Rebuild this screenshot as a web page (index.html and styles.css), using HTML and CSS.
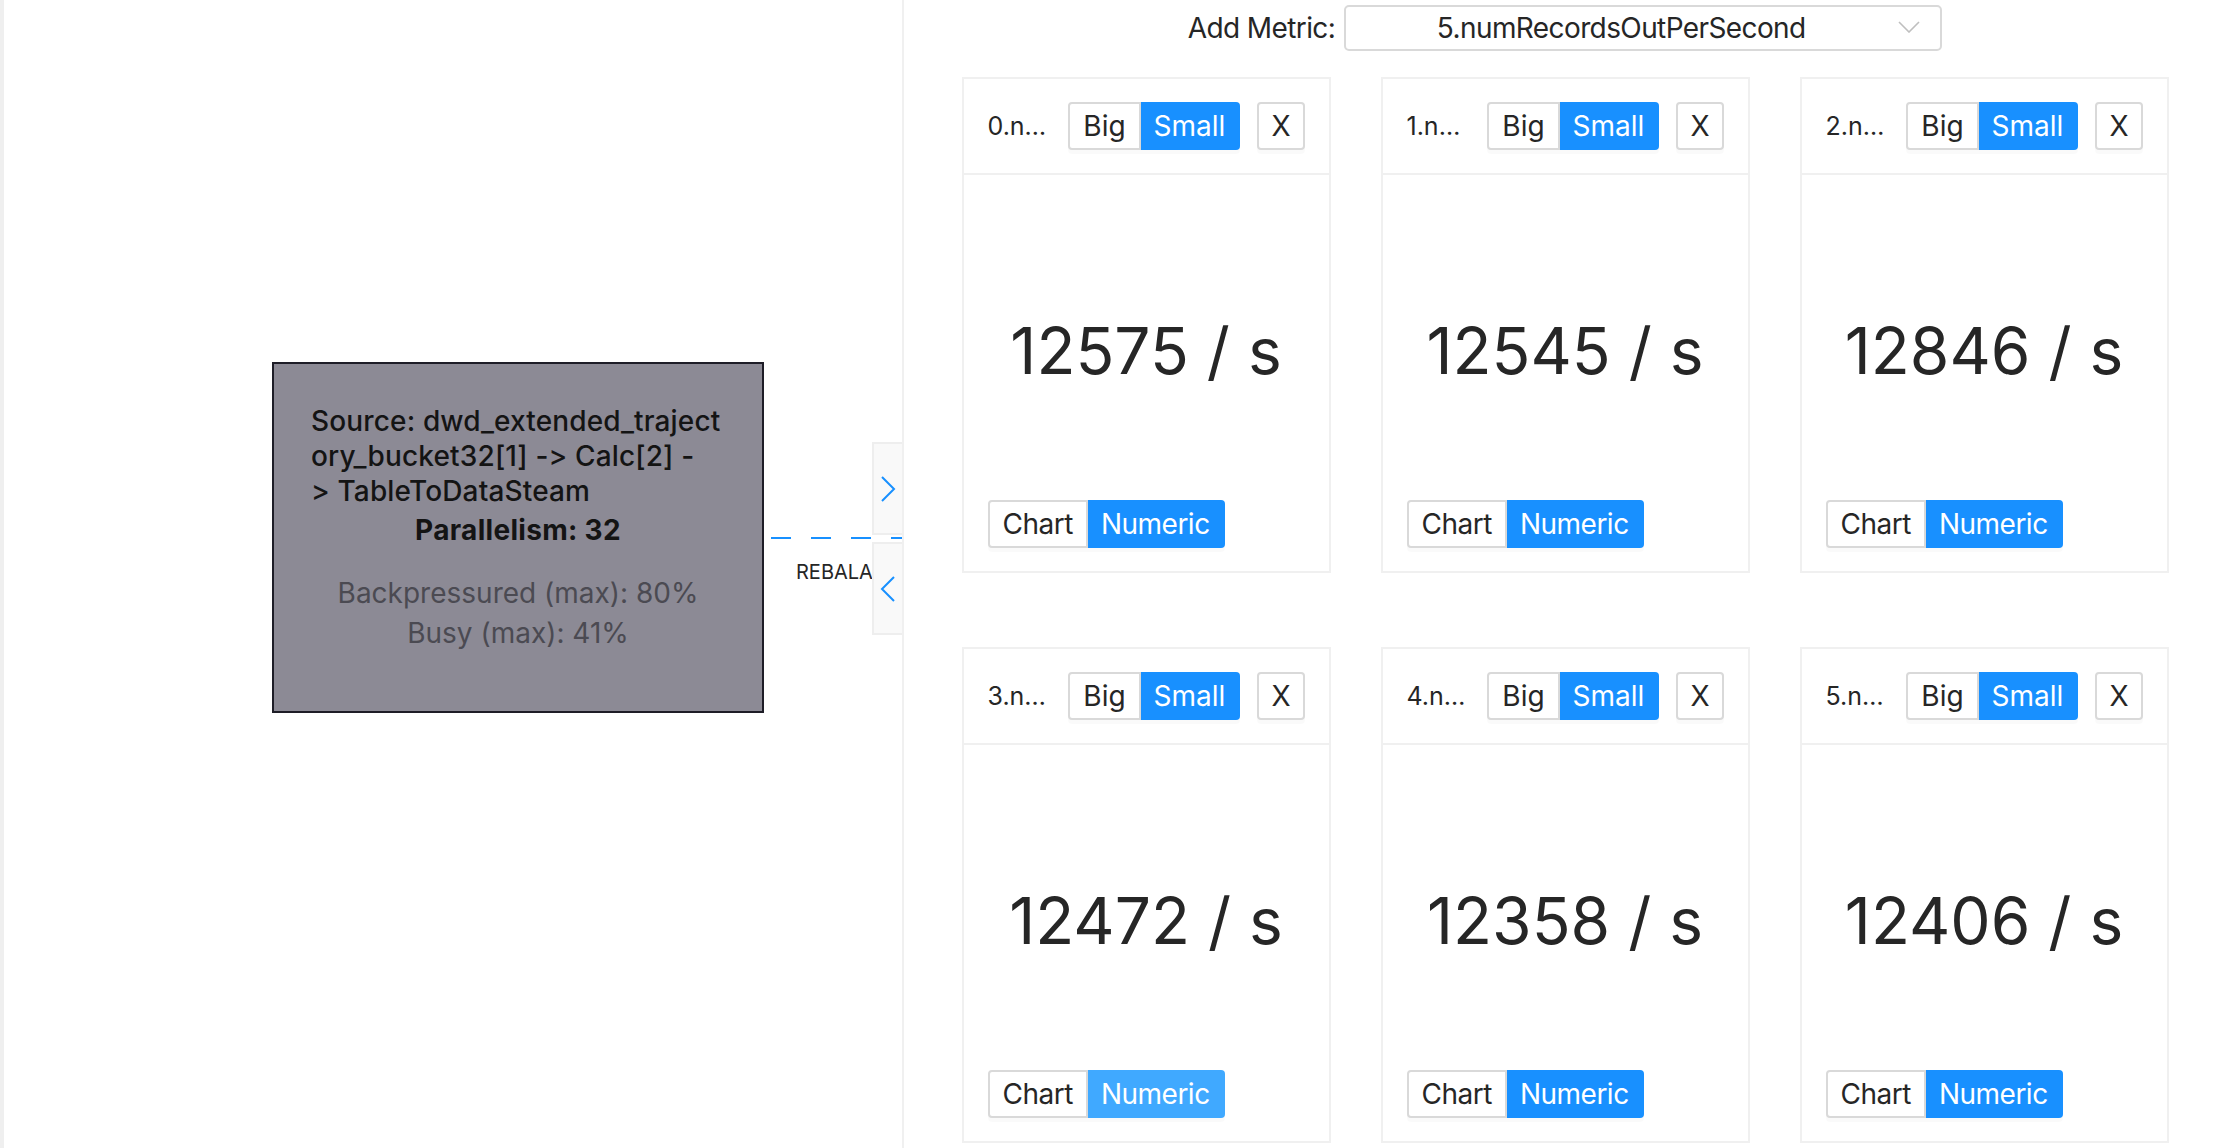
FILE: index.html
```html
<!DOCTYPE html>
<html lang="en">
<head>
<meta charset="utf-8">
<title>Job Graph Metrics</title>
<link rel="stylesheet" href="styles.css">
</head>
<body>
<div class="app">
  <div class="strip"></div>
  <div class="graph">
    <div class="node">
      <h4 class="node-name">Source: dwd_extended_traject<br>ory_bucket32[1] -&gt; Calc[2] -<br>&gt; TableToDataSteam</h4>
      <h5 class="node-par">Parallelism: 32</h5>
      <div class="node-stat first">Backpressured (max): 80%</div>
      <div class="node-stat">Busy (max): 41%</div>
    </div>
    <div class="edge"></div>
    <div class="edge-label">REBALANCE</div>
    <div class="collapse">
      <div class="collapse-btn">
        <svg width="16" height="26" viewBox="0 0 16 26"><polyline points="2,1 14,13 2,25" fill="none" stroke="#1890ff" stroke-width="2"/></svg>
      </div>
      <div class="collapse-btn">
        <svg width="16" height="26" viewBox="0 0 16 26"><polyline points="14,1 2,13 14,25" fill="none" stroke="#1890ff" stroke-width="2"/></svg>
      </div>
    </div>
  </div>
  <div class="panel">
    <div class="toolbar">
      <span class="toolbar-label">Add Metric:</span>
      <div class="select">
        <span class="select-value">5.numRecordsOutPerSecond</span>
        <svg class="select-arrow" width="22" height="12" viewBox="0 0 22 12"><polyline points="1,1 11,11 21,1" fill="none" stroke="#bfbfbf" stroke-width="1.6"/></svg>
      </div>
    </div>
    <div class="grid">
      <div class="card">
        <div class="card-head">
          <span class="card-title">0.numRecordsOutPerSecond</span>
          <div class="group"><span class="rb">Big</span><span class="rb on">Small</span></div>
          <span class="close">X</span>
        </div>
        <div class="card-body">
          <div class="value">12575 / s</div>
          <div class="group"><span class="rb">Chart</span><span class="rb on">Numeric</span></div>
        </div>
      </div>
      <div class="card">
        <div class="card-head">
          <span class="card-title">1.numRecordsOutPerSecond</span>
          <div class="group"><span class="rb">Big</span><span class="rb on">Small</span></div>
          <span class="close">X</span>
        </div>
        <div class="card-body">
          <div class="value">12545 / s</div>
          <div class="group"><span class="rb">Chart</span><span class="rb on">Numeric</span></div>
        </div>
      </div>
      <div class="card">
        <div class="card-head">
          <span class="card-title">2.numRecordsOutPerSecond</span>
          <div class="group"><span class="rb">Big</span><span class="rb on">Small</span></div>
          <span class="close">X</span>
        </div>
        <div class="card-body">
          <div class="value">12846 / s</div>
          <div class="group"><span class="rb">Chart</span><span class="rb on">Numeric</span></div>
        </div>
      </div>
      <div class="card">
        <div class="card-head">
          <span class="card-title">3.numRecordsOutPerSecond</span>
          <div class="group"><span class="rb">Big</span><span class="rb on">Small</span></div>
          <span class="close">X</span>
        </div>
        <div class="card-body">
          <div class="value">12472 / s</div>
          <div class="group"><span class="rb">Chart</span><span class="rb on hover">Numeric</span></div>
        </div>
      </div>
      <div class="card">
        <div class="card-head">
          <span class="card-title">4.numRecordsOutPerSecond</span>
          <div class="group"><span class="rb">Big</span><span class="rb on">Small</span></div>
          <span class="close">X</span>
        </div>
        <div class="card-body">
          <div class="value">12358 / s</div>
          <div class="group"><span class="rb">Chart</span><span class="rb on">Numeric</span></div>
        </div>
      </div>
      <div class="card">
        <div class="card-head">
          <span class="card-title">5.numRecordsOutPerSecond</span>
          <div class="group"><span class="rb">Big</span><span class="rb on">Small</span></div>
          <span class="close">X</span>
        </div>
        <div class="card-body">
          <div class="value">12406 / s</div>
          <div class="group"><span class="rb">Chart</span><span class="rb on">Numeric</span></div>
        </div>
      </div>
    </div>
  </div>
</div>
</body>
</html>
```
FILE: styles.css
```css
html, body {
  margin: 0;
  padding: 0;
  height: 100%;
  overflow: hidden;
  background: #ffffff;
  font-family: Inter, "Noto Sans", "Liberation Sans", sans-serif;
  font-feature-settings: "calt" 0, "liga" 0;
  font-variant-ligatures: none;
  color: #262626;
}

.app {
  display: flex;
  height: 1148px;
}

.strip {
  flex: none;
  width: 4px;
  background: #efefef;
}

.graph {
  flex: 1;
  position: relative;
  overflow: hidden;
  background: #ffffff;
}

.node {
  position: absolute;
  left: 268px;
  top: 362px;
  width: 492px;
  height: 351px;
  box-sizing: border-box;
  border: 2px solid #1e1d27;
  background: #8c8a95;
  padding: 40px 30px 0 37px;
}

.node-name {
  margin: 0;
  font-size: 28px;
  line-height: 35px;
  font-weight: 500;
  color: #141414;
  letter-spacing: 0.15px;
  white-space: nowrap;
}

.node-par {
  margin: 3px 0 0;
  font-size: 28px;
  line-height: 36px;
  font-weight: 700;
  color: #141414;
  text-align: center;
  letter-spacing: 0.3px;
  padding-right: 7px;
}

.node-stat {
  font-size: 28px;
  line-height: 40px;
  color: #4b4a52;
  text-align: center;
  padding-right: 7px;
}

.node-stat.first {
  margin-top: 25px;
}

.edge {
  position: absolute;
  left: 767px;
  top: 537px;
  width: 140px;
  height: 2px;
  background: repeating-linear-gradient(to right, #1890ff 0 20px, transparent 20px 40px);
}

.edge-label {
  position: absolute;
  left: 792px;
  top: 560px;
  font-size: 20px;
  line-height: 24px;
  color: #262626;
  white-space: nowrap;
}

.collapse {
  position: absolute;
  right: 0;
  top: 442px;
  display: flex;
  flex-direction: column;
  gap: 7px;
}

.collapse-btn {
  width: 30px;
  height: 93px;
  box-sizing: border-box;
  background: #f9f9f9;
  border: 2px solid #eeeeee;
  border-right: none;
  display: flex;
  align-items: center;
  justify-content: center;
}

.panel {
  flex: none;
  width: 1322px;
  border-left: 2px solid #f0f0f0;
  display: flex;
  flex-direction: column;
}

.toolbar {
  display: flex;
  justify-content: center;
  align-items: center;
  gap: 9px;
  margin-top: 5px;
  height: 46px;
}

.toolbar-label {
  font-size: 28px;
  letter-spacing: -0.6px;
  color: #262626;
}

.select {
  position: relative;
  width: 598px;
  height: 46px;
  box-sizing: border-box;
  border: 2px solid #d9d9d9;
  border-radius: 5px;
  padding-right: 44px;
  display: flex;
  align-items: center;
  justify-content: center;
  font-size: 28px;
  letter-spacing: -0.6px;
  color: #262626;
}

.select-arrow {
  position: absolute;
  right: 20px;
  top: 14px;
}

.grid {
  display: grid;
  grid-template-columns: repeat(3, 369px);
  grid-auto-rows: 496px;
  column-gap: 50px;
  row-gap: 74px;
  justify-content: center;
  margin-top: 26px;
}

.card {
  box-sizing: border-box;
  border: 2px solid #f0f0f0;
  display: flex;
  flex-direction: column;
  background: #ffffff;
}

.card-head {
  height: 96px;
  box-sizing: border-box;
  border-bottom: 2px solid #f0f0f0;
  display: flex;
  align-items: center;
  padding: 0 24px;
}

.card-title {
  flex: 1;
  min-width: 0;
  overflow: hidden;
  text-overflow: ellipsis;
  white-space: nowrap;
  font-size: 25px;
  margin-right: 18px;
  color: #262626;
}

.group {
  display: flex;
  flex: none;
  align-self: center;
}

.card-body .group {
  align-self: flex-start;
}

.rb {
  height: 48px;
  box-sizing: border-box;
  border: 2px solid #d9d9d9;
  padding: 0 13px;
  font-size: 28px;
  line-height: 44px;
  background: #ffffff;
  color: #262626;
  box-shadow: 0 4px 0 rgba(0, 0, 0, 0.02);
  white-space: nowrap;
}

.card-body .rb {
  letter-spacing: -0.5px;
}

.rb:first-child {
  border-radius: 4px 0 0 4px;
}

.rb:last-child {
  border-radius: 0 4px 4px 0;
}

.rb + .rb {
  border-left: none;
}

.rb.on {
  background: #1890ff;
  border-color: #1890ff;
  color: #ffffff;
}

.rb.on.hover {
  background: #40a9ff;
  border-color: #40a9ff;
}

.close {
  flex: none;
  margin-left: 17px;
  height: 48px;
  box-sizing: border-box;
  border: 2px solid #d9d9d9;
  border-radius: 4px;
  padding: 0 12px;
  font-size: 28px;
  line-height: 44px;
  color: #262626;
  box-shadow: 0 4px 0 rgba(0, 0, 0, 0.02);
}

.card-body {
  flex: 1;
  display: flex;
  flex-direction: column;
  padding: 0 24px 23px;
}

.value {
  flex: 1;
  display: flex;
  align-items: center;
  justify-content: center;
  padding-top: 26px;
  font-size: 64px;
  color: #262626;
  white-space: nowrap;
}
```
